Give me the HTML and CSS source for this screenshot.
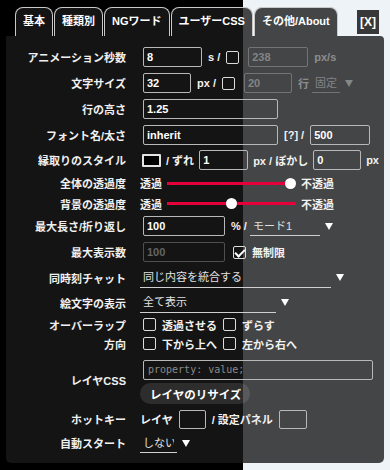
FILE: index.html
```html
<!DOCTYPE html>
<html lang="ja">
<head>
<meta charset="utf-8">
<title>設定</title>
<link rel="stylesheet" href="styles.css">
</head>
<body>
<div class="tabs">
  <div class="tab active">基本</div>
  <div class="tab">種類別</div>
  <div class="tab">NGワード</div>
  <div class="tab">ユーザーCSS</div>
  <div class="tab">その他/About</div>
  <button class="close">[X]</button>
</div>
<div class="panel">
  <div class="row h26">
    <div class="lbl">アニメーション秒数</div>
    <div class="ctl">
      <input class="txt first w59" value="8">
      <span>s /</span>
      <input type="checkbox" class="cb mr3">
      <input class="txt w60" value="238" disabled>
      <span class="dim">px/s</span>
    </div>
  </div>
  <div class="row h26">
    <div class="lbl">文字サイズ</div>
    <div class="ctl">
      <input class="txt first w48" value="32">
      <span>px /</span>
      <input type="checkbox" class="cb mr3">
      <input class="txt w48" value="20" disabled>
      <span class="dim">行</span>
      <select class="sel off" disabled><option>固定</option></select>
      <span class="arrow off"></span>
    </div>
  </div>
  <div class="row h26">
    <div class="lbl">行の高さ</div>
    <div class="ctl">
      <input class="txt first w135" value="1.25">
    </div>
  </div>
  <div class="row h26">
    <div class="lbl">フォント名/太さ</div>
    <div class="ctl">
      <input class="txt first w135" value="inherit">
      <span>[?] /</span>
      <input class="txt w60" value="500">
    </div>
  </div>
  <div class="row h24">
    <div class="lbl">縁取りのスタイル</div>
    <div class="ctl g5">
      <span class="swatch"></span>
      <span>/ ずれ</span>
      <input class="txt w49" value="1">
      <span>px / ぼかし</span>
      <input class="txt w48" value="0">
      <span>px</span>
    </div>
  </div>
  <div class="row h22">
    <div class="lbl">全体の透過度</div>
    <div class="ctl g5">
      <span>透過</span>
      <input type="range" class="rng" min="0" max="100" value="100">
      <span>不透過</span>
    </div>
  </div>
  <div class="row h19">
    <div class="lbl">背景の透過度</div>
    <div class="ctl g5">
      <span>透過</span>
      <input type="range" class="rng" min="0" max="100" value="50">
      <span>不透過</span>
    </div>
  </div>
  <div class="row h26">
    <div class="lbl">最大長さ/折り返し</div>
    <div class="ctl">
      <input class="txt first w82" value="100">
      <span class="pct">% /</span>
      <select class="sel w70"><option>モード1</option></select>
      <span class="arrow"></span>
    </div>
  </div>
  <div class="row h26">
    <div class="lbl">最大表示数</div>
    <div class="ctl">
      <input class="txt first w82" value="100" disabled>
      <input type="checkbox" class="cb ml2" checked>
      <span>無制限</span>
    </div>
  </div>
  <div class="row h25">
    <div class="lbl">同時刻チャット</div>
    <div class="ctl">
      <select class="sel w191"><option>同じ内容を統合する</option></select>
      <span class="arrow"></span>
    </div>
  </div>
  <div class="row h25">
    <div class="lbl">絵文字の表示</div>
    <div class="ctl">
      <select class="sel w136"><option>全て表示</option></select>
      <span class="arrow"></span>
    </div>
  </div>
  <div class="row h19">
    <div class="lbl">オーバーラップ</div>
    <div class="ctl">
      <input type="checkbox" class="cb ml3">
      <span>透過させる</span>
      <input type="checkbox" class="cb">
      <span>ずらす</span>
    </div>
  </div>
  <div class="row h19">
    <div class="lbl">方向</div>
    <div class="ctl">
      <input type="checkbox" class="cb ml3">
      <span>下から上へ</span>
      <input type="checkbox" class="cb">
      <span>左から右へ</span>
    </div>
  </div>
  <div class="row h54">
    <div class="lbl">レイヤCSS</div>
    <div class="ctl col">
      <textarea class="css" placeholder="property: value;"></textarea>
      <button class="btn">レイヤのリサイズ</button>
    </div>
  </div>
  <div class="row h24">
    <div class="lbl">ホットキー</div>
    <div class="ctl">
      <span>レイヤ</span>
      <input class="txt key w27">
      <span>/ 設定パネル</span>
      <input class="txt key w28">
    </div>
  </div>
  <div class="row h24">
    <div class="lbl">自動スタート</div>
    <div class="ctl">
      <select class="sel w37"><option>しない</option></select>
      <span class="arrow"></span>
    </div>
  </div>
</div>
</body>
</html>
```

FILE: styles.css
```css
* { box-sizing: border-box; }
html, body { margin: 0; height: 100%; }
body {
  background: linear-gradient(to right, #000 0, #000 243px, #eef3f8 243px, #eef3f8 100%);
  font-family: "Liberation Sans", "Noto Sans CJK JP", sans-serif;
  font-size: 11px;
  font-weight: bold;
  color: #f2f2f2;
  overflow: hidden;
}

/* tabs */
.tabs {
  display: flex;
  align-items: flex-start;
  gap: 1px;
  height: 36px;
  padding: 7px 11px 0 15px;
}
.tab {
  height: 29px;
  line-height: 27px;
  padding: 0 7px;
  border: 1px solid #c9c9c9;
  border-bottom: 0;
  border-radius: 8px 8px 0 0;
  background: rgba(25, 25, 25, 0.8);
  color: #fff;
  white-space: nowrap;
}
.close {
  margin-left: auto;
  margin-top: 3px;
  width: 22px;
  height: 24px;
  padding: 0;
  border: 0;
  background: #383838;
  color: #fff;
  font: bold 12px "Liberation Sans", sans-serif;
}

/* panel */
.panel {
  margin: 0 6px;
  padding: 8px 0 8px;
  background: rgba(25, 25, 25, 0.8);
  border-radius: 0 4px 5px 5px;
}
.row { display: flex; align-items: center; }
.h26 { height: 26px; }
.h25 { height: 25px; }
.h24 { height: 24px; }
.h22 { height: 22px; }
.h19 { height: 19px; }
.h54 { height: 54px; }

.lbl {
  flex: none;
  width: 120px;
  margin-right: 14px;
  text-align: right;
  white-space: nowrap;
  color: #f0f0f0;
}
.ctl {
  display: flex;
  align-items: center;
  gap: 6px;
  white-space: nowrap;
}
.ctl.g5 { gap: 5px; }
.ctl.col {
  flex-direction: column;
  align-items: flex-start;
  gap: 3px;
  padding-top: 4px;
}
.dim { color: rgba(255, 255, 255, 0.4); }

/* text inputs */
.txt {
  height: 20px;
  padding: 0 3px;
  margin: 0;
  border: 1px solid #b8b8b8;
  border-radius: 2px;
  background: transparent;
  color: #fff;
  font: bold 11px "Liberation Sans", "Noto Sans CJK JP", sans-serif;
  outline: none;
}
.txt:disabled {
  border-color: rgba(255, 255, 255, 0.25);
  color: rgba(255, 255, 255, 0.35);
}
.txt.first { margin-left: 3px; }
.txt.key { height: 19px; }
.w27 { width: 27px; }
.w28 { width: 28px; }
.w48 { width: 48px; }
.w49 { width: 49px; }
.w59 { width: 59px; }
.w60 { width: 60px; }
.w82 { width: 82px; }
.w135 { width: 135px; }

/* checkboxes */
.cb {
  -webkit-appearance: none;
  appearance: none;
  flex: none;
  position: relative;
  width: 13px;
  height: 13px;
  margin: 0;
  border: 1.5px solid #dcdcdc;
  border-radius: 2px;
  background: transparent;
}
.cb:checked::after {
  content: "";
  position: absolute;
  left: 3px;
  top: 0;
  width: 4px;
  height: 8px;
  border: solid #fff;
  border-width: 0 2px 2px 0;
  transform: rotate(45deg);
}
.cb.mr3 { margin-right: 3px; }
.cb.ml2 { margin-left: 2px; }
.cb.ml3 { margin-left: 3px; }

/* colour swatch */
.swatch {
  flex: none;
  width: 19px;
  height: 13px;
  margin-left: 2px;
  border: 2px solid #e4e4e4;
  border-radius: 1px;
  background: #000;
}

/* sliders */
.rng {
  -webkit-appearance: none;
  appearance: none;
  width: 129px;
  height: 11px;
  margin: 0;
  background: transparent;
}
.rng::-webkit-slider-runnable-track {
  height: 3px;
  background: #e6003b;
  border: 0;
}
.rng::-webkit-slider-thumb {
  -webkit-appearance: none;
  width: 11px;
  height: 11px;
  margin-top: -4px;
  border: 0;
  border-radius: 50%;
  background: #fff;
}

/* selects */
.sel {
  -webkit-appearance: none;
  appearance: none;
  height: 20px;
  margin: 0;
  padding: 0 3px;
  border: 0;
  border-bottom: 1px solid #d0d0d0;
  border-radius: 0;
  background: transparent;
  color: #e0e0e0;
  font: 11px "Liberation Sans", "Noto Sans CJK JP", sans-serif;
  outline: none;
}
.sel.off {
  width: 28px;
  margin-left: -3px;
  color: rgba(255, 255, 255, 0.35);
  border-bottom-color: rgba(255, 255, 255, 0.25);
  opacity: 1;
}
.w37 { width: 37px; }
.w70 { width: 70px; }
.w136 { width: 136px; }
.w191 { width: 191px; }
.pct { margin-right: -3px; }
.arrow {
  flex: none;
  width: 0;
  height: 0;
  margin-left: -1px;
  border-left: 4px solid transparent;
  border-right: 4px solid transparent;
  border-top: 7px solid #fff;
}
.arrow.off { border-top-color: rgba(255, 255, 255, 0.35); }

/* layer css */
.css {
  width: 230px;
  height: 20px;
  margin: 0 0 0 3px;
  padding: 3px 4px;
  border: 1px solid #b8b8b8;
  border-radius: 2px;
  background: transparent;
  color: #fff;
  font: 10px/12px "DejaVu Sans Mono", monospace;
  resize: none;
  overflow: hidden;
  outline: none;
}
.css::placeholder { color: #8a8a8a; }
.btn {
  height: 21px;
  padding: 0 9px 0 10px;
  border: 0;
  border-radius: 11px;
  background: rgba(255, 255, 255, 0.11);
  color: #fff;
  font: bold 11.5px "Liberation Sans", "Noto Sans CJK JP", sans-serif;
}
```
